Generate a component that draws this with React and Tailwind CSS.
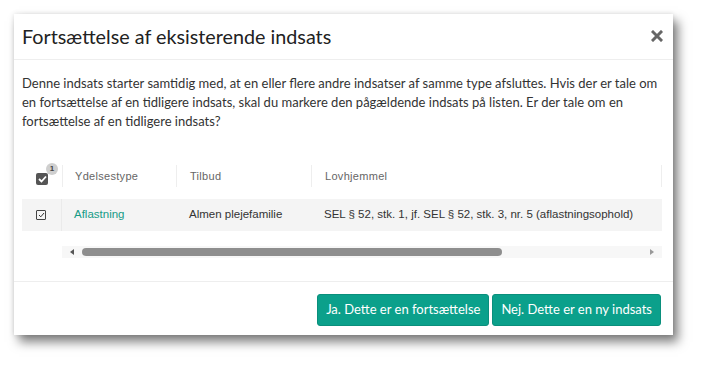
export default function App() {
  const seg = { fontFamily: 'Lato, "Noto Sans", sans-serif' };
  const ar = { fontFamily: '"Liberation Sans", Arial, sans-serif' };
  return (
    <div className="w-[708px] h-[371px] bg-white pt-[14px] pl-[14px]">
      <div
        className="w-[659px] h-[321px] bg-white flex flex-col shadow-[5px_7px_10px_rgba(0,0,0,0.5),0_0_5px_rgba(0,0,0,0.12)]"
        style={seg}
      >
        <div className="h-[46px] flex items-center justify-between pl-[8px] pr-[10px] border-b border-[#eeeeee]">
          <h1 className="text-[19.75px] text-[#222] leading-none">Fortsættelse af eksisterende indsats</h1>
          <svg width="12" height="12" viewBox="0 0 12 12" className="mt-[-2px]">
            <path d="M2 2 L10 10 M10 2 L2 10" stroke="#666" strokeWidth="3" strokeLinecap="square" />
          </svg>
        </div>
        <div className="px-[8px] pt-[14px] flex-1">
          <p className="text-[13px] leading-[19px] text-[#333]">
            Denne indsats starter samtidig med, at en eller flere andre indsatser af samme type afsluttes. Hvis der er tale om en fortsættelse af en tidligere indsats, skal du markere den pågældende indsats på listen. Er der tale om en fortsættelse af en tidligere indsats?
          </p>
          <div className="mt-[29px] w-[640px]" style={ar}>
            <div className="flex h-[32px] items-center text-[11px] text-[#666] font-medium tracking-[0.3px]">
              <div className="w-[40px] h-full flex items-center pl-[14px] relative">
                <div className="w-[12px] h-[12px] bg-[#555] rounded-[2px] flex items-center justify-center mt-[6px]">
                  <svg width="9" height="8" viewBox="0 0 9 8">
                    <path d="M1 4 L3.5 6.5 L8 1.5" stroke="#fff" strokeWidth="1.8" fill="none" />
                  </svg>
                </div>
                <div className="absolute left-[24px] top-[3px] w-[12px] h-[12px] rounded-full bg-[#cfcfcf] text-[8px] text-[#444] flex items-center justify-center font-bold">1</div>
              </div>
              <div className="w-[114px] h-[22px] flex items-center pl-[12px] border-l border-[#eeeeee]">Ydelsestype</div>
              <div className="w-[135px] h-[22px] flex items-center pl-[13px] border-l border-[#eeeeee]">Tilbud</div>
              <div className="flex-1 h-[22px] flex items-center pl-[13px] border-l border-r border-[#eeeeee]">Lovhjemmel</div>
            </div>
            <div className="mt-[7px] flex h-[32px] items-center bg-[#f4f4f4] text-[11.5px] text-[#333]">
              <div className="w-[40px] h-full flex items-center pl-[14px] border-r border-[#eaeaea]">
                <div className="w-[10px] h-[10px] border border-[#444] rounded-[1px] flex items-center justify-center">
                  <svg width="7" height="6" viewBox="0 0 7 6">
                    <path d="M1 3 L2.8 4.8 L6 1" stroke="#333" strokeWidth="1" fill="none" />
                  </svg>
                </div>
              </div>
              <div className="w-[114px] pl-[12px] text-[#169b86]">Aflastning</div>
              <div className="w-[135px] pl-[13px]">Almen plejefamilie</div>
              <div className="flex-1 pl-[13px]">SEL § 52, stk. 1, jf. SEL § 52, stk. 3, nr. 5 (aflastningsophold)</div>
            </div>
            <div className="mt-[15px] ml-[40px] h-[12px] bg-[#f7f7f7] flex items-center">
              <svg width="12" height="12" viewBox="0 0 12 12" className="ml-[4px]">
                <path d="M8 3 L4 6 L8 9 Z" fill="#555" />
              </svg>
              <div className="ml-[4px] w-[420px] h-[8px] rounded-full bg-[#8e8e8e]" />
              <div className="flex-1" />
              <svg width="12" height="12" viewBox="0 0 12 12" className="mr-[4px]">
                <path d="M4 3 L8 6 L4 9 Z" fill="#999" />
              </svg>
            </div>
          </div>
        </div>
        <div className="h-[54px] border-t border-[#eeeeee] flex items-start justify-end pt-[12px] pr-[12px] gap-[3px]">
          <button className="h-[32px] px-[8px] rounded-[3px] bg-[#0ba08b] text-white text-[13px] border border-[#0a8f7c]">Ja. Dette er en fortsættelse</button>
          <button className="h-[32px] px-[8px] rounded-[3px] bg-[#0ba08b] text-white text-[13px] border border-[#0a8f7c]">Nej. Dette er en ny indsats</button>
        </div>
      </div>
    </div>
  );
}
